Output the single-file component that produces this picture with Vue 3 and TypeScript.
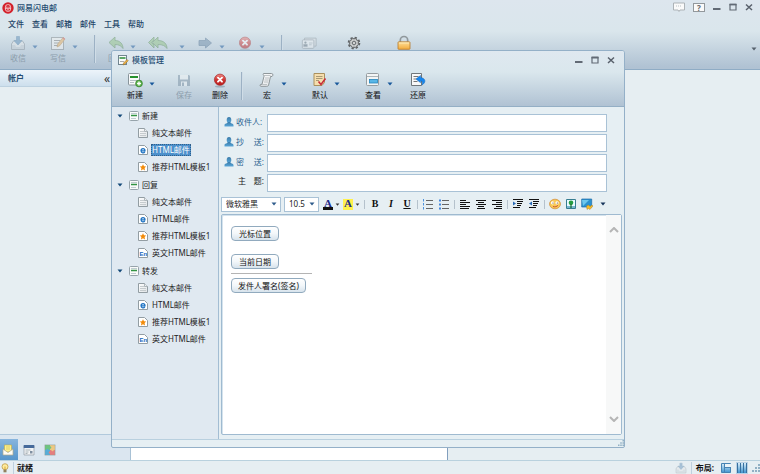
<script setup lang="ts">
import { ref } from 'vue'

interface Tool {
  icon: string
  name: string
  label?: string
  gap: string
  menu?: boolean
  disabled?: boolean
  wide?: boolean
  separated?: boolean
}
interface TreeItem { icon: string; text: string }
interface TreeGroup { title: string; items: TreeItem[] }

const menus = ['文件', '查看', '邮箱', '邮件', '工具', '帮助']

const mainTools: Tool[] = [
  { icon: 'inbox', name: '收信', label: '收信', gap: 'g3', menu: true, disabled: true },
  { icon: 'compose', name: '写信', label: '写信', gap: 'g5', menu: true, disabled: true },
  { icon: 'reply', name: '回复', label: '回复', gap: 'g6', menu: true, disabled: true, separated: true },
  { icon: 'reply-all', name: '全部', gap: 'g0', menu: true, disabled: true, wide: true },
  { icon: 'forward', name: '转发', gap: 'g5', menu: true, disabled: true },
  { icon: 'delete', name: '删除', gap: 'g5', menu: true, disabled: true },
  { icon: 'contacts', name: '通讯录', gap: 'g12', disabled: true, separated: true },
  { icon: 'gear', name: '设置', gap: 'g15' },
  { icon: 'lock', name: '锁定', gap: 'g20' },
]

const dialogTools: Tool[] = [
  { icon: 'new', name: '新建', label: '新建', gap: 'g8', menu: true },
  { icon: 'save', name: '保存', label: '保存', gap: 'g14', disabled: true },
  { icon: 'delete', name: '删除', label: '删除', gap: 'g6' },
  { icon: 'macro', name: '宏', label: '宏', gap: 'g10', menu: true, separated: true },
  { icon: 'default', name: '默认', label: '默认', gap: 'g18', menu: true },
  { icon: 'view', name: '查看', label: '查看', gap: 'g18', menu: true },
  { icon: 'restore', name: '还原', label: '还原', gap: 'g10' },
]

const plain = { icon: 'page', text: '纯文本邮件' }
const html = { icon: 'page-html', text: 'HTML邮件' }
const starred = { icon: 'page-star', text: '推荐HTML模板1' }
const english = { icon: 'page-en', text: '英文HTML邮件' }
const groups: TreeGroup[] = [
  { title: '新建', items: [plain, html, starred] },
  { title: '回复', items: [plain, html, starred, english] },
  { title: '转发', items: [plain, html, starred, english] },
]

const fields = [
  { id: 'to', parts: ['收件人:'], person: true },
  { id: 'cc', parts: ['抄', '送:'], person: true },
  { id: 'bcc', parts: ['密', '送:'], person: true },
  { id: 'subject', parts: ['主', '题:'], person: false },
]

const formatGroups = [
  [{ icon: 'ol', name: '编号列表' }, { icon: 'ul', name: '项目符号' }],
  [{ icon: 'left', name: '左对齐' }, { icon: 'center', name: '居中' }, { icon: 'right', name: '右对齐' }],
  [{ icon: 'indent', name: '增加缩进' }, { icon: 'outdent', name: '减少缩进' }],
  [{ icon: 'emoji', name: '表情' }, { icon: 'picture', name: '图片' }, { icon: 'capture', name: '截图' }],
]

const selected = ref('0-1')
const values = ref<Record<string, string>>({ to: '', cc: '', bcc: '', subject: '' })
</script>

<template>
  <svg class="defs" aria-hidden="true">
    <defs>
      <linearGradient id="red" x2="0" y2="1"><stop stop-color="#f08a86" /><stop offset=".5" stop-color="#cf3532" /><stop offset="1" stop-color="#b92020" /></linearGradient>
      <linearGradient id="gold" x2="0" y2="1"><stop stop-color="#ffe09a" /><stop offset="1" stop-color="#f3ab3c" /></linearGradient>
      <linearGradient id="person" x2="0" y2="1"><stop stop-color="#3b7ca9" /><stop offset="1" stop-color="#5aa7d8" /></linearGradient>
      <linearGradient id="paper" x2="1" y2="1"><stop stop-color="#fff" /><stop offset="1" stop-color="#dfe3e6" /></linearGradient>
      <linearGradient id="pane" x2="0" y2="1"><stop stop-color="#d9ecf8" /><stop offset="1" stop-color="#3f94cf" /></linearGradient>
    </defs>
    <symbol id="logo" viewBox="0 0 16 16">
      <circle cx="8" cy="8" r="7.6" fill="#d3202b" />
      <g fill="none" stroke="#fff" stroke-width=".9"><rect x="4.500" y="3.500" width="7" height="9" rx="3" /><path d="M6.500 6v2M9.500 6v2M4.500 8.500h7M6.500 10.500h3" /></g>
    </symbol>
    <symbol id="inbox" viewBox="0 0 16 16">
      <path d="M1.500 9l2-3h9l2 3v5.500h-13z" fill="#e4e7e9" stroke="#8a959e" /><path d="M2 10h3l1 2h4l1-2h3v4H2z" fill="#c6ced4" />
      <path d="M6.500 1.500h3v4h2.500L8 10 4 5.500h2.500z" fill="#5d8db8" stroke="#41749f" stroke-width=".6" />
    </symbol>
    <symbol id="compose" viewBox="0 0 16 16">
      <rect x="1.500" y="2.500" width="12" height="12" fill="#f5f5f3" stroke="#858b8e" /><path d="M4 5.500h6M4 8h5M4 10.500h4" stroke="#808080" />
      <path d="M7 12l.7-3L13 2.500l2 1.500-5.300 6.800z" fill="#eeb25f" stroke="#ae7530" stroke-width=".6" /><path d="M12.300 3.400l.9-1.200 2 1.500-.9 1.200z" fill="#d65a53" />
    </symbol>
    <symbol id="reply" viewBox="0 0 16 16"><path d="M7 2L1 7.500 7 13V9.500c4 0 6.500 1.500 8 4C15 9 12 5.500 7 5.500z" fill="#8fc183" stroke="#568854" stroke-width=".8" /></symbol>
    <symbol id="reply-all" viewBox="0 0 20 16"><path d="M6 2L.5 7.500 6 13v-3L3.500 7.500 6 5z" fill="#8fc183" stroke="#568854" stroke-width=".8" /><path d="M10 2L4.500 7.500 10 13V9.500c4.500 0 7.500 1.500 9 4C19 9 16 5.500 10 5.500z" fill="#8fc183" stroke="#568854" stroke-width=".8" /></symbol>
    <symbol id="forward" viewBox="0 0 16 16"><path d="M2 5.500h6.500V3L14.500 8l-6 5v-2.500H2z" fill="#6d8ba8" stroke="#4c6d8e" stroke-width=".8" /></symbol>
    <symbol id="delete" viewBox="0 0 16 16"><ellipse cx="8" cy="14.500" rx="5" ry="1" fill="#71899a" opacity=".5" /><circle cx="8" cy="7.700" r="5.600" fill="url(#red)" stroke="#a52b2b" stroke-width=".7" /><path d="M6 5.700l4 4M10 5.700l-4 4" stroke="#fff" stroke-width="1.900" stroke-linecap="round" /></symbol>
    <symbol id="contacts" viewBox="0 0 18 16"><path d="M4 5V2.500h13v9h-2" fill="#dde2e6" stroke="#8a949c" /><rect x="1.500" y="4.500" width="13" height="9.500" rx="1" fill="#eef1f3" stroke="#8a949c" /><circle cx="5" cy="7.500" r="1.300" fill="#66737e" /><path d="M3 12V9.500h4V12zM9 8h4M9 10h3" fill="#66737e" stroke="#8b98a2" stroke-width=".8" /></symbol>
    <symbol id="gear" viewBox="0 0 16 16"><circle cx="8" cy="8" r="5.300" fill="none" stroke="#5f6265" stroke-width="2" stroke-dasharray="2.200 1.963" /><circle cx="8" cy="8" r="4.500" fill="#d4d6d6" stroke="#696c6e" /><path d="M8 4v8M4 8h8M5.200 5.200l5.600 5.600M10.800 5.200l-5.600 5.600" stroke="#8d9092" stroke-width=".7" /><circle cx="8" cy="8" r="1.500" fill="#fff" stroke="#64686b" /></symbol>
    <symbol id="lock" viewBox="0 0 16 16"><path d="M4.300 7V5.200a3.700 3.700 0 0 1 7.400 0V7" fill="none" stroke="#90989c" stroke-width="1.700" /><rect x="2" y="6.800" width="12" height="7.500" rx=".7" fill="url(#gold)" stroke="#b6792a" stroke-width=".8" /><path d="M3 8h10" stroke="#fff0bf" stroke-width=".8" /></symbol>
    <symbol id="new" viewBox="0 0 16 16"><rect x="1.500" y="1.500" width="11" height="11.500" rx="1" fill="#f8f9f9" stroke="#88949b" /><path d="M3 5h8" stroke="#26912e" stroke-width="2" /><path d="M3 8.500h7M3 10.500h4" stroke="#b6bfc5" /><circle cx="12" cy="11.500" r="3.400" fill="#5db54b" stroke="#337c2d" stroke-width=".7" /><path d="M12 9.500v4M10 11.500h4" stroke="#fff" stroke-width="1.400" /></symbol>
    <symbol id="save" viewBox="0 0 16 16"><path d="M2 3h11l1 1v10H2z" fill="#758ca0" /><path d="M4 3h8v4.500H4zM5 9.500h6V14H5z" fill="#eef2f4" /><path d="M6 10.500h2V14H6z" fill="#758ca0" /></symbol>
    <symbol id="macro" viewBox="0 0 16 16"><path d="M4.500 1.500h8c2 0 1.500 2.500.5 3h-1.500l-2 9c-.3.500-1 .8-2 .8H2c-1.500 0-1-2 0-2h1l2-8C5 2.500 3.500 3 4.500 1.500z" fill="url(#paper)" stroke="#858c90" stroke-width=".9" /><path d="M3 12.500h5M6 6h4M5.500 8h4M5 10h4M5 3.500h6.500" stroke="#b0b6b9" stroke-width=".8" /></symbol>
    <symbol id="default" viewBox="0 0 16 16"><path d="M2 1.500h10.500v9L10 13.500H2z" fill="#f5deae" stroke="#aa905d" /><path d="M4 4.500h6.500M4 6.500h6.500M4 8.500h3" stroke="#aa9974" /><path d="M6.500 9.500L9 12.500l4.500-6" fill="none" stroke="#c72e3a" stroke-width="1.600" /></symbol>
    <symbol id="view" viewBox="0 0 16 16"><rect x="1.500" y="1.500" width="12" height="12" rx="1" fill="#f3f5f5" stroke="#969da1" /><path d="M2 4.500h11" stroke="#adb5b8" /><rect x="4.500" y="7.500" width="8" height="3.500" fill="#58b6e6" stroke="#2486bd" stroke-width=".8" /></symbol>
    <symbol id="restore" viewBox="0 0 16 16"><path d="M1.500 1.500h10v12h-10z" fill="#f8f8f8" stroke="#70777b" /><path d="M3.500 4.500h5M3.500 7h3M3.500 9.500h4" stroke="#777" /><path d="M10.500 3.500L6 7l4.500 3.700V8.700c2 0 2.500 1.800 1.500 4.300 4.500-2.500 3.500-7-1.500-7.500z" fill="#1686ed" stroke="#0d65bd" stroke-width=".5" /></symbol>
    <symbol id="template" viewBox="0 0 10 10"><rect x=".5" y=".5" width="9" height="9" rx="1" fill="#fafbfa" stroke="#96a3ab" /><path d="M2 2.500h6M2 7.500h5" stroke="#c0cbd1" /><path d="M2 4.500h6" stroke="#329343" stroke-width="1.500" /></symbol>
    <symbol id="template-edit" viewBox="0 0 12 12"><rect x="1.500" y="1.500" width="8" height="9" fill="#fafbfa" stroke="#718590" /><path d="M2.500 4h6" stroke="#278d36" stroke-width="1.700" /><path d="M3 7.500h4" stroke="#aaa" /><path d="M6 11l.5-2 3.500-3.500 1.200 1.200L7.800 10.200z" fill="#edb146" stroke="#8e6620" stroke-width=".5" /></symbol>
    <symbol id="page" viewBox="0 0 10 10"><path d="M.5.500h6L9.500 3.500v6h-9z" fill="url(#paper)" stroke="#929da3" /><path d="M6.500.500v3h3" fill="#edf0f1" stroke="#929da3" stroke-width=".7" /><path d="M2 3.500h4M2 5.500h6M2 7.500h6" stroke="#c5cbce" /></symbol>
    <symbol id="page-html" viewBox="0 0 10 10"><path d="M.5.500h6L9.500 3.500v6h-9z" fill="#fff" stroke="#929da3" /><path d="M3 5.800h4c0-2.900-3.900-2.900-4 0 0 2.600 3 2.500 3.800 1.100" fill="none" stroke="#1e73c3" stroke-width="1.200" /></symbol>
    <symbol id="page-star" viewBox="0 0 10 10"><path d="M.5.500h6L9.500 3.500v6h-9z" fill="#fff" stroke="#929da3" /><path d="M5 2.200l1 2 2.200.3-1.600 1.600.4 2.300L5 7.300 3 8.400l.4-2.300-1.600-1.600L4 4.200z" fill="#f28c0c" /></symbol>
    <symbol id="page-en" viewBox="0 0 10 10"><path d="M.5.500h6L9.500 3.500v6h-9z" fill="#fff" stroke="#929da3" /><text x="1.500" y="7.800" font-family="Liberation Sans, sans-serif" font-size="6" font-weight="700" fill="#1767bd">En</text></symbol>
    <symbol id="user" viewBox="0 0 10 10"><ellipse cx="5" cy="3" rx="2.300" ry="2.900" fill="url(#person)" /><path d="M.5 9.500V8C.5 6.500 3.800 6.500 3.800 5h2.400c0 1.500 3.300 1.500 3.300 3v1.500z" fill="url(#person)" /></symbol>
    <symbol id="ol" viewBox="0 0 12 12"><path d="M1.500 1v2.500M1.500 5v2.500M1.500 9v2.500" fill="none" stroke="#4b91dd" /><path d="M4 2.500h7M4 6.500h7M4 10.500h7" stroke="#666" /></symbol>
    <symbol id="ul" viewBox="0 0 12 12"><path d="M1 1.500h2v2H1zM1 5.500h2v2H1zM1 9.500h2v2H1z" fill="#4488dd" /><path d="M4 2.500h7M4 6.500h7M4 10.500h7" stroke="#666" /></symbol>
    <symbol id="left" viewBox="0 0 12 12"><path d="M1 2.500h6M1 4.500h10M1 6.500h6M1 8.500h10M1 10.500h9" stroke="#111" /></symbol>
    <symbol id="center" viewBox="0 0 12 12"><path d="M1 2.500h10M3 4.500h6M1 6.500h10M3 8.500h6M2 10.500h8" stroke="#111" /></symbol>
    <symbol id="right" viewBox="0 0 12 12"><path d="M1 2.500h10M5 4.500h6M1 6.500h10M5 8.500h6M3 10.500h8" stroke="#111" /></symbol>
    <symbol id="indent" viewBox="0 0 12 12"><path d="M1 1.500h10M5 3.500h6M5 5.500h5M5 7.500h4M1 9.500h7" stroke="#111" /><path d="M1 3.500l3 2-3 2z" fill="#286bb7" /></symbol>
    <symbol id="outdent" viewBox="0 0 12 12"><path d="M1 1.500h10M5 3.500h6M5 5.500h5M5 7.500h4M1 9.500h7" stroke="#111" /><path d="M4 3.500l-3 2 3 2z" fill="#286bb7" /></symbol>
    <symbol id="emoji" viewBox="0 0 12 12"><ellipse cx="6" cy="6" rx="5.500" ry="4.800" fill="#f8c959" stroke="#d38c36" stroke-width=".7" /><circle cx="3.500" cy="4.800" r="1.600" fill="#fff" /><circle cx="8" cy="4.800" r="1.600" fill="#fff" /><circle cx="4" cy="5" r=".6" fill="#52311d" /><circle cx="8.300" cy="5" r=".6" fill="#52311d" /><path d="M4 8.500c2 .8 4 0 5-1.300" fill="none" stroke="#c44b32" stroke-width=".9" /></symbol>
    <symbol id="picture" viewBox="0 0 12 12"><path d="M1.500 1.500h9v9h-9z" fill="#e9faff" stroke="#377d91" /><path d="M2 8h8v2H2z" fill="#77b6cf" /><circle cx="6" cy="4.700" r="2.300" fill="#249c40" /><path d="M6 6v4" stroke="#176b2b" stroke-width="1.200" /></symbol>
    <symbol id="capture" viewBox="0 0 12 12"><path d="M.7 1h10v8h-10z" fill="#2b91ce" stroke="#1e6fa9" stroke-width=".7" /><path d="M1 2h7L2 8z" fill="#6dc7ec" /><path d="M5.500 8l2-1 1.500 1.500L11 7l1 1-3 3.500-1.500-1L6 11.500z" fill="#f7bb28" stroke="#a7791d" stroke-width=".4" /></symbol>
    <symbol id="mail" viewBox="0 0 12 12"><path d="M2.500 1h7v7h-7z" fill="#fff18d" stroke="#c3ac45" stroke-width=".6" /><path d="M1 5l5 3.500L11 5v6H1z" fill="#fffdf4" stroke="#b3aa8a" stroke-width=".7" /><path d="M4 3h4M4 5h4" stroke="#cdbf63" stroke-width=".7" /></symbol>
    <symbol id="calendar" viewBox="0 0 12 12"><path d="M1 2h10v9H1z" fill="#f1f3f5" stroke="#9099a4" stroke-width=".7" /><path d="M.7 1h10.600v3H.7z" fill="#466a9b" /><path d="M2.500 6h5M2.500 8h3M2.500 9.500h2" stroke="#9ba4ab" stroke-width=".8" /><path d="M7 7h2.500v2.500H7z" fill="#7f8fa1" /></symbol>
    <symbol id="puzzle" viewBox="0 0 12 12"><path d="M1 1h5v5H1z" fill="#6ec581" /><path d="M6 1h5v5H6z" fill="#edc782" /><path d="M1 6h5v5H1z" fill="#58add8" /><path d="M6 6h5v5H6z" fill="#e57f7f" /><circle cx="6" cy="3.500" r="1.200" fill="#6ec581" /><circle cx="3.500" cy="6" r="1.200" fill="#58add8" /><circle cx="8.500" cy="6" r="1.200" fill="#edc782" /><circle cx="6" cy="8.500" r="1.200" fill="#e57f7f" /><path d="M.8.8h10.400v10.400H.8z" fill="none" stroke="#8d9b96" stroke-width=".5" /></symbol>
    <symbol id="bulb" viewBox="0 0 10 10"><circle cx="5" cy="3.700" r="3" fill="#ffec9f" stroke="#bf9c45" stroke-width=".8" /><path d="M3.500 6.500h3v2.800h-3z" fill="#92805d" /><path d="M5 3.500v3" stroke="#d9a72b" /></symbol>
    <symbol id="layout-a" viewBox="0 0 12 12"><path d="M1.500 1.500h9v9h-9z" fill="url(#pane)" stroke="#4683b3" /><path d="M4.500 1v10M4.500 5.500h6.500" stroke="#4683b3" /><path d="M5 2h6v3H5z" fill="#eaf3f8" /></symbol>
    <symbol id="layout-b" viewBox="0 0 12 12"><path d="M1 1h10v10H1z" fill="url(#pane)" /><path d="M1.500 1v10M4.500 1v10M7.500 1v10M10.500 1v10" stroke="#37709f" /></symbol>
    <symbol id="grip" viewBox="0 0 8 8"><path d="M6 0h2v2H6zM3 3h2v2H3zM6 3h2v2H6zM0 6h2v2H0zM3 6h2v2H3zM6 6h2v2H6z" fill="#91b0c4" /></symbol>
    <symbol id="bubble" viewBox="0 0 12 11"><path d="M.5 1.500h11v7H7L6 10 5 8.500H.5z" fill="#fafafa" stroke="#adb3b7" /><path d="M3 4.500h6" stroke="#b8c0c4" stroke-dasharray="1 1" /></symbol>
    <symbol id="min" viewBox="0 0 8 8"><path d="M0 6h7.500" stroke="#626a75" stroke-width="2" /></symbol>
    <symbol id="max" viewBox="0 0 8 8"><path d="M1 1.500h6V7H1z" fill="none" stroke="#626a75" stroke-width="1.200" /><path d="M.5 1.500h7" stroke="#626a75" stroke-width="1.800" /></symbol>
    <symbol id="close" viewBox="0 0 8 8"><path d="M1 1.500l6 5.500M7 1.500L1 7" stroke="#59616c" stroke-width="1.500" /></symbol>
    <symbol id="caret" viewBox="0 0 6 4"><path d="M.5.500h5L3 3.500z" fill="currentColor" /></symbol>
  </svg>

  <div class="app">
    <header class="chrome">
      <div class="titlebar">
        <svg class="i12"><use href="#logo" /></svg>
        <h1>网易闪电邮</h1>
        <div class="winctl main">
          <button aria-label="消息"><svg class="i12"><use href="#bubble" /></svg></button>
          <button class="help">?</button>
          <button aria-label="最小化"><svg class="i8"><use href="#min" /></svg></button>
          <button aria-label="最大化"><svg class="i8"><use href="#max" /></svg></button>
          <button aria-label="关闭"><svg class="i8"><use href="#close" /></svg></button>
        </div>
      </div>
      <nav class="menubar"><button v-for="m in menus" :key="m">{{ m }}</button></nav>
      <div class="toolbar">
        <template v-for="t in mainTools" :key="t.name">
          <span v-if="t.separated" class="tsep"></span>
          <button class="tool" :class="[t.gap, { wide: t.wide }]" :disabled="t.disabled" :aria-label="t.name">
            <svg :class="t.wide ? 'i20' : 'i16'"><use :href="'#' + t.icon" /></svg><span v-if="t.label">{{ t.label }}</span>
          </button>
          <button v-if="t.menu" class="drop" :disabled="t.disabled" :aria-label="t.name + '菜单'"><svg class="caret"><use href="#caret" /></svg></button>
        </template>
        <button class="drop overflow" aria-label="更多"><svg class="caret"><use href="#caret" /></svg></button>
      </div>
    </header>

    <main class="panes">
      <aside class="side">
        <div class="sidehead"><h2>帐户</h2><button aria-label="折叠">«</button></div>
        <div class="accounts"></div>
        <nav class="sidenav">
          <button class="on" aria-label="邮件"><svg class="i12"><use href="#mail" /></svg></button>
          <button aria-label="日历"><svg class="i12"><use href="#calendar" /></svg></button>
          <button aria-label="应用"><svg class="i12"><use href="#puzzle" /></svg></button>
        </nav>
      </aside>
      <section class="list"></section>
      <section class="reader"></section>
    </main>

    <footer class="status">
      <svg class="i10"><use href="#bulb" /></svg><span class="ssep"></span><b>就绪</b>
      <div class="layouts">
        <svg class="i12 faint"><use href="#inbox" /></svg><span class="ssep"></span><span class="lab">布局:</span>
        <button aria-label="上下布局"><svg class="i12"><use href="#layout-a" /></svg></button>
        <button class="on" aria-label="左右布局"><svg class="i12"><use href="#layout-b" /></svg></button>
        <svg class="i8"><use href="#grip" /></svg>
      </div>
    </footer>

    <section class="dialog" role="dialog" aria-labelledby="dlg-title">
      <header class="dlghead">
        <div class="dlgtitle">
          <svg class="i12"><use href="#template-edit" /></svg>
          <h2 id="dlg-title">模板管理</h2>
          <div class="winctl">
            <button aria-label="最小化"><svg class="i8"><use href="#min" /></svg></button>
            <button aria-label="最大化"><svg class="i8"><use href="#max" /></svg></button>
            <button aria-label="关闭"><svg class="i8"><use href="#close" /></svg></button>
          </div>
        </div>
        <div class="toolbar">
          <template v-for="t in dialogTools" :key="t.name">
            <span v-if="t.separated" class="tsep near"></span>
            <button class="tool" :class="t.gap" :disabled="t.disabled"><svg class="i16"><use :href="'#' + t.icon" /></svg><span>{{ t.label }}</span></button>
            <button v-if="t.menu" class="drop" :aria-label="t.name + '菜单'"><svg class="caret"><use href="#caret" /></svg></button>
          </template>
        </div>
      </header>

      <div class="dlgbody">
        <nav class="tree">
          <section v-for="(g, gi) in groups" :key="g.title">
            <button class="row head"><svg class="caret"><use href="#caret" /></svg><svg class="i10"><use href="#template" /></svg><span>{{ g.title }}</span></button>
            <button v-for="(it, i) in g.items" :key="it.text" class="row leaf" :class="{ on: selected === gi + '-' + i }" @click="selected = gi + '-' + i">
              <svg class="i10"><use :href="'#' + it.icon" /></svg><span>{{ it.text }}</span>
            </button>
          </section>
        </nav>

        <div class="compose">
          <form class="fields" @submit.prevent>
            <div v-for="f in fields" :key="f.id" class="field">
              <label :for="f.id" :class="{ plain: !f.person }">
                <svg v-if="f.person" class="i10"><use href="#user" /></svg>
                <span class="spread"><span v-for="p in f.parts" :key="p">{{ p }}</span></span>
              </label>
              <input :id="f.id" v-model="values[f.id]" type="text" />
            </div>
          </form>

          <div class="format">
            <label class="pick face"><select aria-label="字体"><option>微软雅黑</option><option>宋体</option></select><svg class="caret"><use href="#caret" /></svg></label>
            <label class="pick size"><select aria-label="字号"><option>10.5</option><option>12</option></select><svg class="caret"><use href="#caret" /></svg></label>
            <button class="color" aria-label="文字颜色"><span class="ink">A</span><svg class="mini"><use href="#caret" /></svg></button>
            <button class="color" aria-label="背景颜色"><span class="mark">A</span><svg class="mini"><use href="#caret" /></svg></button>
            <span class="fsep"></span>
            <button class="glyph"><b>B</b></button><button class="glyph"><i>I</i></button><button class="glyph"><u>U</u></button>
            <template v-for="(g, n) in formatGroups" :key="n">
              <span class="fsep"></span>
              <button v-for="b in g" :key="b.icon" class="glyph" :aria-label="b.name"><svg class="i12"><use :href="'#' + b.icon" /></svg></button>
            </template>
            <button class="glyph" aria-label="更多格式"><svg class="caret"><use href="#caret" /></svg></button>
          </div>

          <div class="editor">
            <div class="page">
              <button class="macro">光标位置</button>
              <button class="macro second">当前日期</button>
              <hr />
              <button class="macro long">发件人署名(签名)</button>
            </div>
            <div class="scroll">
              <button aria-label="向上滚动"><svg viewBox="0 0 10 6"><path d="M1 5l4-4 4 4" /></svg></button>
              <button aria-label="向下滚动"><svg viewBox="0 0 10 6"><path d="M1 1l4 4 4-4" /></svg></button>
            </div>
          </div>
        </div>
      </div>
      <footer class="dlgfoot"><svg class="i6"><use href="#grip" /></svg></footer>
    </section>
  </div>
</template>

<style>
body { margin: 0; }
</style>

<style scoped>
* { box-sizing: border-box; }
.defs { position: absolute; width: 0; height: 0; }
.app {
  position: relative; display: flex; flex-direction: column; min-height: 100vh;
  overflow: hidden; background: #e6eef2; color: #111;
  font: 8px/12px "Noto Sans", "Noto Sans CJK SC", sans-serif;
}
button, input, select { font: inherit; color: inherit; margin: 0; padding: 0; border: 0; background: none; border-radius: 0; }
h1, h2 { margin: 0; font-size: 8px; font-weight: 500; color: #254d72; }
svg { display: block; flex: none; }
.i6 { width: 6px; height: 6px; }
.i8 { width: 8px; height: 8px; }
.i10 { width: 10px; height: 10px; }
.i12 { width: 12px; height: 12px; }
.i16 { width: 16px; height: 16px; }
.i20 { width: 20px; height: 16px; }
.caret { width: 6px; height: 4px; }

.chrome { height: 70px; background: linear-gradient(#dde6ee, #dae6ec 45%, #b0c2d3 97%); border-bottom: 1px solid #8facc5; }
.titlebar { display: flex; align-items: center; height: 16px; padding: 0 7px 0 2px; gap: 3px; }
.winctl { display: flex; align-items: center; gap: 8px; margin-left: auto; }
.winctl.main { padding-bottom: 2px; }
.help { width: 12px; height: 9px; border: 1px solid #92989c; background: #fafafa; font-size: 8px; line-height: 7px; font-weight: 700; color: #666; }
.menubar { display: flex; gap: 8px; height: 15px; padding-left: 8px; color: #1f4568; font-weight: 500; }
.toolbar { display: flex; align-items: flex-start; height: 37px; padding-top: 4px; }
.tool { display: flex; flex-direction: column; align-items: center; width: 30px; height: 32px; line-height: 14px; white-space: nowrap; }
.tool.wide { width: 44px; }
.tool:disabled svg, .drop:disabled { opacity: .48; }
.tool:disabled span { color: #8c9dac; }
.drop { width: 6px; height: 4px; margin: 10px 0 0 -1px; color: #19589b; }
.overflow { margin: 12px 3px 0 auto; color: #56616c; }
.tsep { width: 1px; height: 28px; margin-left: 16px; background: #9cb1c4; box-shadow: 1px 0 #d0dde7; }
.tsep.near { margin-left: 6px; }
.g0 { margin-left: 0; } .g3 { margin-left: 3px; } .g5 { margin-left: 5px; } .g6 { margin-left: 6px; } .g8 { margin-left: 8px; }
.g10 { margin-left: 10px; } .g12 { margin-left: 12px; } .g14 { margin-left: 14px; } .g15 { margin-left: 15px; } .g18 { margin-left: 18px; } .g20 { margin-left: 20px; }

.panes { flex: 1; display: grid; grid-template-columns: 131px minmax(0, 317px) 1fr; border-bottom: 1px solid #b9d1de; }
.side { display: flex; flex-direction: column; border-right: 1px solid #a8c1d5; }
.sidehead { display: flex; justify-content: space-between; height: 17px; padding: 2px 20px 0 8px; background: linear-gradient(#edf4fa, #cddfed); border-bottom: 1px solid #bdd1e0; }
.sidehead h2 { font-weight: 700; }
.sidehead button { font-size: 12px; line-height: 10px; color: #333; }
.accounts { flex: 1; border-bottom: 1px solid #b1c9dc; }
.sidenav { display: flex; height: 25px; padding-top: 4px; background: #dbe6f0; }
.sidenav button { display: grid; place-items: center; width: 21px; }
.sidenav .on { width: 18px; background: linear-gradient(#87b5dd, #5796cb); padding-right: 2px; }
.list { background: #fff; border-right: 1px solid #829fbe; }
.status { display: flex; align-items: center; height: 13px; gap: 3px; }
.ssep { width: 1px; height: 12px; background: #bed0de; }
.layouts { display: flex; align-items: center; gap: 4px; margin-left: auto; }
.layouts .on { background: #b9d1e5; }
.lab { font-weight: 700; margin-right: 2px; }
.faint { opacity: .45; }

.dialog { position: absolute; inset: 50px 135px 26px 111px; display: flex; flex-direction: column; background: #e6eff3; border: 1px solid #94b0c8; border-radius: 3px 3px 2px 2px; overflow: hidden; }
.dlghead { height: 56px; background: linear-gradient(#dfe8f0, #dae7ed 38%, #b0c2d3); border-bottom: 1px solid #94afc5; }
.dlgtitle { display: flex; align-items: center; height: 17px; padding: 0 9px 0 5px; gap: 3px; }
.dlghead .toolbar { height: 38px; }
.dlgbody { flex: 1; display: flex; min-height: 0; border-bottom: 1px solid #b9d0df; }
.tree { width: 107px; flex: none; background: #e0e9f1; border-right: 1px solid #a3bdd3; }
.tree section + section { margin-top: 1px; }
.row { display: flex; align-items: center; width: 100%; height: 17px; white-space: nowrap; text-align: left; color: #222; }
.head { padding-left: 5px; gap: 3px; }
.head .caret { color: #124878; }
.head .i10 { margin-left: 3px; }
.leaf { padding-left: 26px; gap: 3px; }
.leaf span { padding: 0 1px; }
.leaf.on span { background: #4d90cb; color: #fff; outline: 1px dotted #315f8b; outline-offset: -1px; }
.compose { flex: 1; min-width: 0; display: flex; flex-direction: column; padding: 7px 2px 4px; }
.fields { display: grid; gap: 2px; padding-right: 15px; }
.field { display: flex; height: 18px; }
.field label { display: flex; align-items: center; width: 46px; padding: 0 3px 2px 3px; gap: 2px; color: #28618f; white-space: nowrap; }
.field .plain { color: #222; padding-left: 17px; padding-bottom: 4px; gap: 0; }
.spread { flex: 1; display: flex; justify-content: space-between; }
.field input { flex: 1; min-width: 0; height: 18px; padding: 0 3px; background: #fff; border: 1px solid #a9c2d6; }
.format { display: flex; align-items: center; height: 16px; margin: 4px 0 2px; }
.pick { display: flex; align-items: center; height: 15px; padding-right: 3px; background: #fff; border: 1px solid #a9c2d6; color: #2f5c8c; }
.pick select { appearance: none; flex: 1; min-width: 0; height: 13px; padding-left: 4px; color: #222; outline: 0; }
.face { width: 60px; margin-right: 3px; }
.size { width: 35px; margin-right: 3px; }
.color { display: flex; align-items: center; width: 20px; height: 14px; padding-left: 1px; gap: 2px; }
.color span { width: 10px; height: 11px; font: 700 11px/9px "Liberation Serif", serif; color: #20288a; text-align: center; }
.ink { border-bottom: 3px solid #111; }
.mark { background: #fff14c; }
.mini { width: 5px; height: 3px; color: #333; }
.fsep { width: 1px; height: 9px; margin: 0 2px; background: #b5c2cc; }
.glyph { display: grid; place-items: center; width: 16px; height: 14px; font: 700 10px/12px "Liberation Serif", serif; color: #16345a; }
.glyph b, .glyph i, .glyph u { color: #111; }
.editor { flex: 1; display: flex; min-height: 0; background: #fff; border: 1px solid #9fbad0; box-shadow: inset 1px 1px #d5e3ed; border-radius: 2px; }
.page { flex: 1; display: flex; flex-direction: column; align-items: flex-start; padding: 11px 9px; }
.macro { height: 15px; padding: 0 7px; line-height: 12px; white-space: nowrap; color: #111; background: linear-gradient(#fff, #f3f7fa 50%, #d7e3ec); border: 1px solid #91aabe; border-radius: 4px; }
.macro.long { padding: 0 6px; }
.second { margin-top: 13px; }
.page hr { width: 81px; height: 1px; margin: 4px 0; border: 0; background: #b4b4b4; }
.scroll { width: 15px; display: flex; flex-direction: column; justify-content: space-between; align-items: center; padding: 12px 0; background: #f7f8f8; }
.scroll svg { width: 10px; height: 6px; fill: none; stroke: #b5b5b5; stroke-width: 2; }
.scroll button { height: 6px; }
.dlgfoot { display: flex; justify-content: flex-end; height: 7px; }
</style>
